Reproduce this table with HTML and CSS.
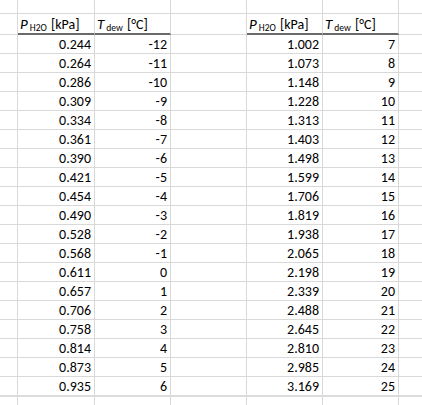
FILE: index.html
```html
<!DOCTYPE html>
<html>
<head>
<meta charset="utf-8">
<link rel="stylesheet" href="styles.css">
</head>
<body>
<div class="sheet">
  <div class="row top">
    <div class="c a"></div><div class="c n"></div><div class="c n"></div><div class="c n"></div><div class="c n"></div><div class="c n"></div><div class="c g"></div>
  </div>
  <div class="row head">
    <div class="c a"></div>
    <div class="c n h"><i>P</i><sub>H2O</sub> [kPa]</div>
    <div class="c n h"><i>T</i><sub>dew</sub> [°C]</div>
    <div class="c n"></div>
    <div class="c n h"><i>P</i><sub>H2O</sub> [kPa]</div>
    <div class="c n h"><i>T</i><sub>dew</sub> [°C]</div>
    <div class="c g"></div>
  </div>
  <div id="rows"></div>
  <div class="row tail">
    <div class="c a"></div><div class="c n"></div><div class="c n"></div><div class="c n"></div><div class="c n"></div><div class="c n"></div><div class="c g"></div>
  </div>
</div>
<script>
var L=["0.244","0.264","0.286","0.309","0.334","0.361","0.390","0.421","0.454","0.490","0.528","0.568","0.611","0.657","0.706","0.758","0.814","0.873","0.935"];
var R=["1.002","1.073","1.148","1.228","1.313","1.403","1.498","1.599","1.706","1.819","1.938","2.065","2.198","2.339","2.488","2.645","2.810","2.985","3.169"];
var html="";
for(var i=0;i<19;i++){
  html+='<div class="row data'+(i==18?' last':'')+'"><div class="c a"></div>'+
  '<div class="c n v">'+L[i]+'</div><div class="c n v">'+(i-12)+'</div><div class="c n"></div>'+
  '<div class="c n v">'+R[i]+'</div><div class="c n v">'+(i+7)+'</div><div class="c g"></div></div>';
}
document.getElementById("rows").innerHTML=html;
</script>
</body>
</html>
```
FILE: styles.css
```css
html, body {
  margin: 0;
  padding: 0;
  background: #fff;
}
.sheet {
  width: 422px;
  height: 405px;
  overflow: hidden;
  font-family: Carlito, Lato, "Open Sans", sans-serif;
  font-size: 14px;
  color: #000;
}
.row {
  display: flex;
  box-sizing: border-box;
}
.c {
  box-sizing: border-box;
  border-right: 1px solid #d9d9d9;
  border-bottom: 1px solid #d9d9d9;
  flex: none;
  white-space: nowrap;
  overflow: hidden;
}
.a { width: 18px; }
.n { width: 76px; }
.row .n:nth-child(2) { width: 77px; }
.g { width: 40px; border-right: none; }
.top .c { height: 14px; }
.head .c { height: 21px; }
.head .h {
  border-bottom: 2px solid #6a6a6a;
  padding: 1px 0 0 2px;
  line-height: 18px;
}
.head i { font-size: 15px; }
.head sub {
  font-size: 9.5px;
  vertical-align: -2px;
  margin-left: 2px;
  margin-right: 1px;
}
.data .c { height: 19px; }
.data .v {
  text-align: right;
  padding: 1px 3px 0 0;
  line-height: 17px;
}
.last .c { border-bottom: 2px solid #dcdcdc; height: 20px; }
.tail .c { height: 30px; border-bottom: none; }
```
